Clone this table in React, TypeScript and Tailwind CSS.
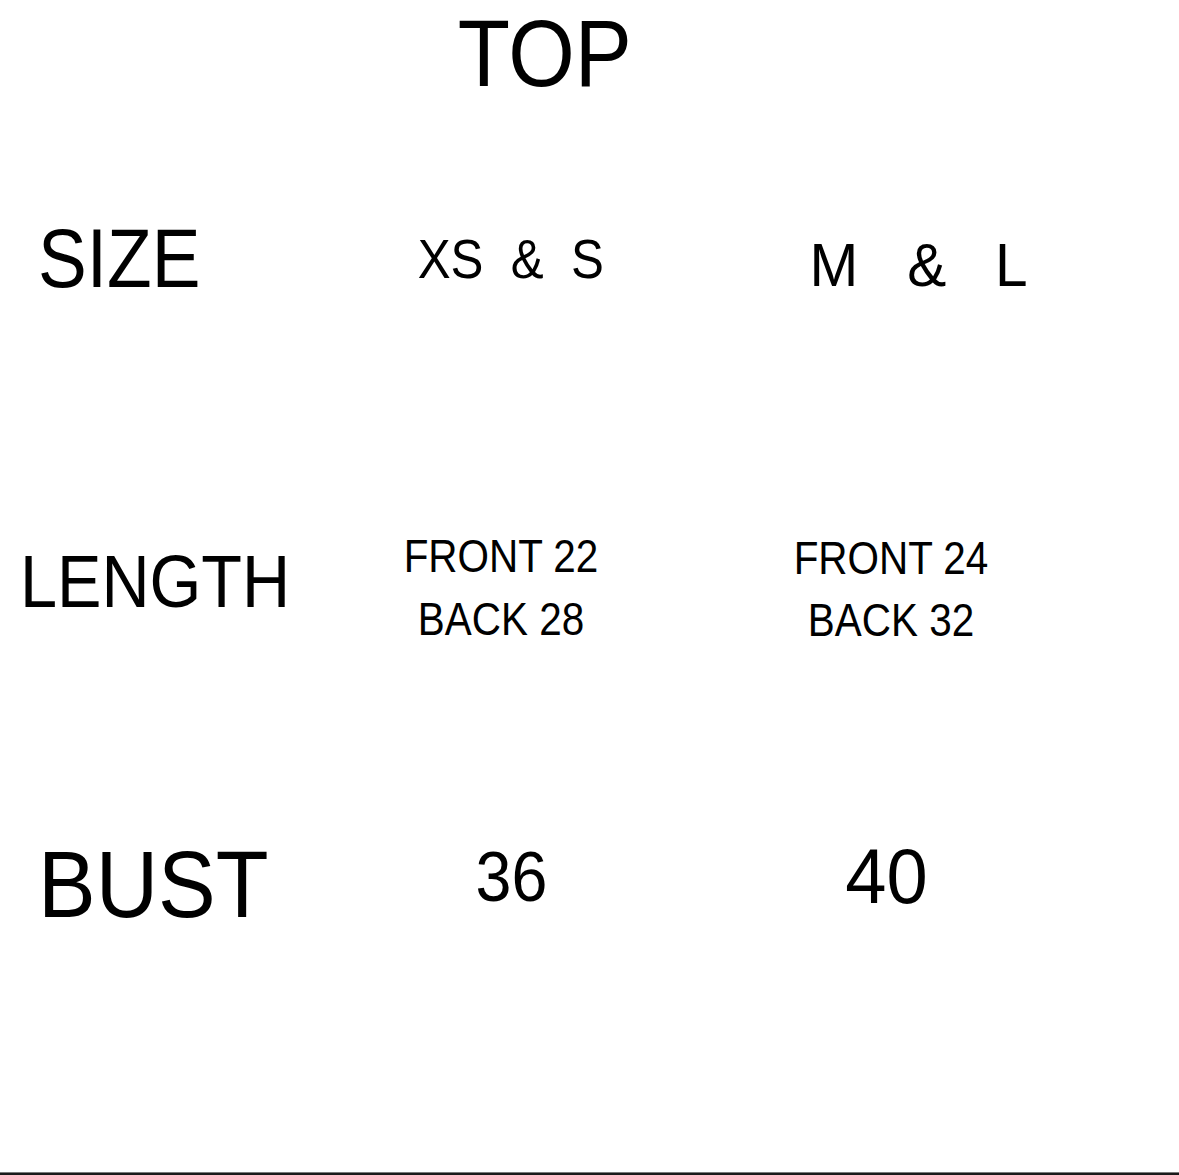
const font = { fontFamily: '"Liberation Sans", Arial, sans-serif' }

export default function App() {
  return (
    <div className="flex h-[1175px] w-[1179px] flex-col bg-white text-black" style={font}>
      {/* Title */}
      <div className="h-[200px]">
        <div className="mt-[6px] w-[1090px] text-center text-[95px] leading-none">
          <span className="inline-block scale-x-[0.9]">TOP</span>
        </div>
      </div>

      {/* Size row */}
      <div className="flex h-[320px] items-start">
        <div className="ml-[38px] mt-[16px] w-[300px] text-[84px] leading-none">
          <span className="inline-block origin-left scale-x-[0.87]">SIZE</span>
        </div>
        <div className="ml-[53px] mt-[31px] w-[240px] text-center text-[56px] leading-none">
          <span className="inline-block scale-x-[0.88] whitespace-pre">XS  &amp;  S</span>
        </div>
        <div className="ml-[168px] mt-[35px] w-[240px] text-center text-[61px] leading-none">
          <span className="inline-block scale-x-[0.96] whitespace-pre">M   &amp;   L</span>
        </div>
      </div>

      {/* Length row */}
      <div className="flex h-[310px] items-start">
        <div className="ml-[20px] mt-[25px] w-[340px] text-[74px] leading-none">
          <span className="inline-block origin-left scale-x-[0.9]">LENGTH</span>
        </div>
        <div className="ml-[21px] mt-[4px] w-[240px] text-center text-[47px] leading-[63px]">
          <div className="scale-x-[0.86]">FRONT 22</div>
          <div className="scale-x-[0.86]">BACK 28</div>
        </div>
        <div className="ml-[150px] mt-[7px] w-[240px] text-center text-[47px] leading-[62px]">
          <div className="scale-x-[0.86]">FRONT 24</div>
          <div className="scale-x-[0.86]">BACK 32</div>
        </div>
      </div>

      {/* Bust row */}
      <div className="flex flex-1 items-start">
        <div className="ml-[38px] mt-[7px] w-[300px] text-[95px] leading-none">
          <span className="inline-block origin-left scale-x-[0.91]">BUST</span>
        </div>
        <div className="ml-[53px] mt-[11px] w-[240px] text-center text-[71px] leading-none">
          <span className="inline-block scale-x-[0.91]">36</span>
        </div>
        <div className="ml-[135px] mt-[7px] w-[240px] text-center text-[78px] leading-none">
          <span className="inline-block scale-x-[0.95]">40</span>
        </div>
      </div>

      {/* Bottom rule */}
      <div className="h-[1px] bg-[#7a7a7a]" />
      <div className="h-[2px] bg-[#1a1a1a]" />
    </div>
  )
}
